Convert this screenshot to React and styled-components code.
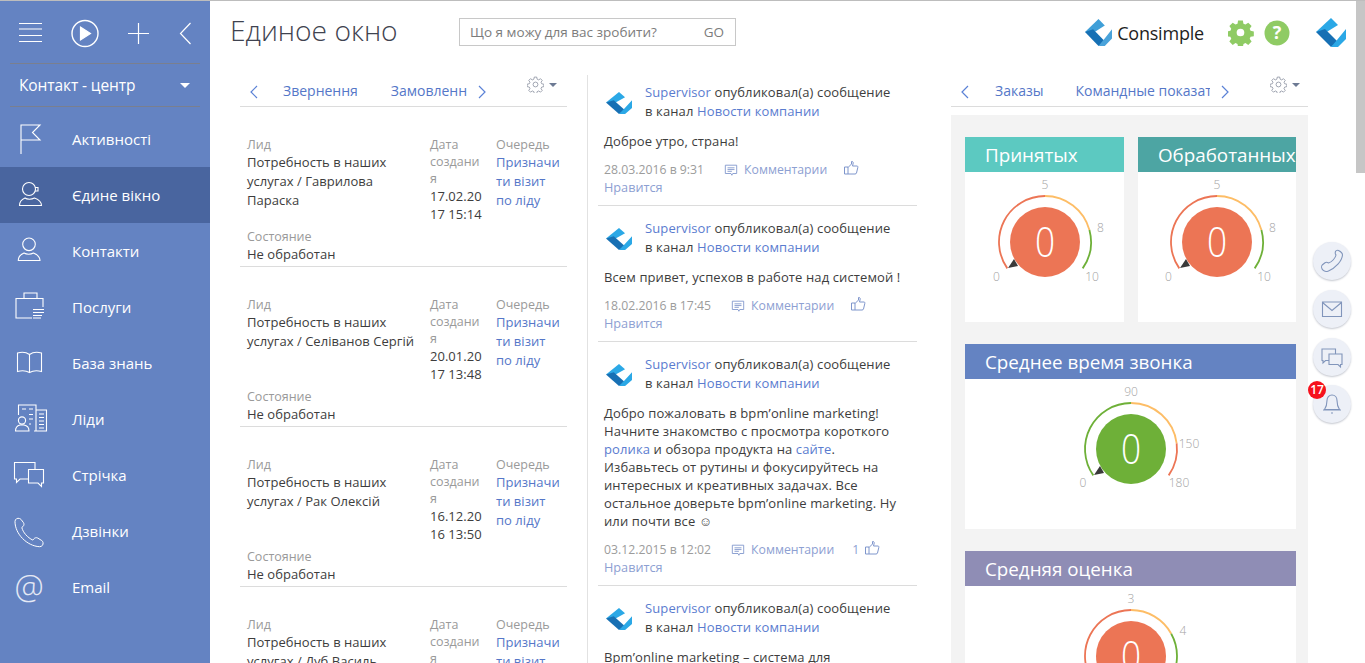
import React from "react";
import styled, { createGlobalStyle } from "styled-components";

const Global = createGlobalStyle`
  html, body { margin: 0; padding: 0; height: 100%; overflow: hidden; background: #fff; }
  body { font-family: "Open Sans", "Noto Sans", sans-serif; color: #444; }
  * { box-sizing: border-box; }
`;

const FONT = `"Open Sans", "Noto Sans", sans-serif`;

const Page = styled.div`
  position: relative;
  display: flex;
  width: 100%;
  height: 100vh;
  overflow: hidden;
  border-top: 1px solid #bdbdbd;
`;

/* ---------- sidebar ---------- */
const Sidebar = styled.aside`
  flex: 0 0 210px;
  background: #6483c2;
  color: #fff;
  display: flex;
  flex-direction: column;
`;
const ToolRow = styled.div`
  height: 63px;
  margin: 0 10px;
  padding-top: 14px;
  border-bottom: 1px solid #7a7f8e;
`;
const ToolSvg = styled.svg`
  display: block;
  fill: none;
  stroke: #fff;
  stroke-width: 1.2;
`;
const SectionRow = styled.div`
  height: 43px;
  margin: 0 10px;
  padding: 0 10px 0 9px;
  display: flex;
  align-items: center;
  justify-content: space-between;
  border-bottom: 1px solid #7a7f8e;
  font-size: 15.5px;
  font-weight: 500;
  letter-spacing: -0.1px;
`;
const Caret = styled.span`
  width: 0;
  height: 0;
  border-left: ${(p) => p.$s || 5}px solid transparent;
  border-right: ${(p) => p.$s || 5}px solid transparent;
  border-top: ${(p) => p.$s || 5}px solid ${(p) => p.$color || "#fff"};
`;
const Menu = styled.nav`
  margin-top: 4px;
  display: flex;
  flex-direction: column;
`;
const MenuItem = styled.div`
  height: 56px;
  padding-left: 10px;
  display: flex;
  align-items: center;
  gap: 22px;
  font-size: 15px;
  font-weight: 500;
  background: ${(p) => (p.$active ? "#49659f" : "transparent")};
`;
const MenuIcon = styled.svg`
  flex: 0 0 40px;
  width: 40px;
  height: 40px;
  fill: none;
  stroke: #fff;
  stroke-width: 1.1;
`;
const AtGlyph = styled.span`
  flex: 0 0 40px;
  width: 40px;
  padding-right: 2px;
  text-align: center;
  font-size: 33px;
  font-weight: 300;
  line-height: 40px;
  color: #e4e9f5;
`;

/* ---------- main ---------- */
const Main = styled.main`
  flex: 1;
  min-width: 0;
  display: flex;
  flex-direction: column;
`;
const Header = styled.header`
  height: 69px;
  flex: none;
  padding: 17px 19px 0 20px;
  display: flex;
  align-items: flex-start;
`;
const Title = styled.h1`
  margin: 0;
  width: 229px;
  font-size: 28.200px;
  line-height: 24px;
  font-weight: 300;
  color: #3f4350;
  white-space: nowrap;
`;
const Search = styled.div`
  width: 277px;
  height: 28px;
  border: 1px solid #c8c8c8;
  display: flex;
  align-items: center;
  justify-content: space-between;
  padding: 0 11px 0 10px;
  font-size: 13.5px;
  color: #7c7c7c;
`;
const HeaderRight = styled.div`
  margin-left: auto;
  display: flex;
  align-items: center;
  height: 29px;
`;
const Brand = styled.span`
  margin: 0 24px 0 5px;
  font-size: 18px;
  color: #1e1e1e;
  letter-spacing: -0.2px;
`;
const GearIcon = styled.svg`
  display: block;
  margin-right: 10px;
`;
const HelpIcon = styled.svg`
  display: block;
  margin-right: 26px;
`;
const Columns = styled.div`
  flex: 1;
  min-height: 0;
  display: flex;
  padding-left: 30px;
`;
const LeftCol = styled.section`
  flex: 0 0 327px;
  min-width: 0;
`;
const MiddleCol = styled.section`
  flex: 0 0 364px;
  margin: 5px 0 0 20px;
  padding: 0 34px 0 10px;
  border-left: 1px solid #e2e2e2;
`;
const RightCol = styled.section`
  flex: 0 0 357px;
  min-width: 0;
`;

/* tabs */
const Tabs = styled.div`
  height: 37px;
  display: flex;
  align-items: flex-end;
  border-bottom: 1px solid #dcdcdc;
  padding: 0 0 5px 9px;
  position: relative;
`;
const Chevron = styled.svg`
  flex: none;
  width: 10px;
  height: 14px;
  margin-bottom: 2px;
  fill: none;
  stroke: #5b82d6;
  stroke-width: 1.2;
`;
const TabViewport = styled.div`
  width: ${(p) => p.$w}px;
  margin: 0 10px 0 ${(p) => p.$ml}px;
  overflow: hidden;
  display: flex;
  gap: ${(p) => p.$gap}px;
  white-space: nowrap;
  font-size: 14px;
  line-height: 20px;
  color: #5577c8;
`;
const Settings = styled.div`
  position: absolute;
  right: ${(p) => p.$r}px;
  top: 6px;
  display: flex;
  align-items: center;
  gap: 5px;
`;
const GearSvg = styled.svg`
  width: 17px;
  height: 17px;
  fill: none;
  stroke: #7b8394;
  stroke-width: 1;
`;

/* lead list */
const Lead = styled.article`
  height: 160px;
  padding: 29px 0 0 7px;
  border-bottom: 1px solid #dcdcdc;
  display: flex;
  flex-direction: column;
`;
const LeadGrid = styled.div`
  display: grid;
  grid-template-columns: 172px 11px 54px 12px 66px;
  flex: none;
  height: 91px;
`;
const Label = styled.div`
  font-size: 12.500px;
  line-height: 17px;
  color: #9a9a9a;
`;
const Value = styled.div`
  font-size: 13px;
  line-height: 19px;
  color: #3d3d3d;
  letter-spacing: 0.03px;
`;
const LeadName = styled.div`
  grid-column: 1;
`;
const DateCell = styled.div`
  grid-column: 3;
  overflow-wrap: anywhere;
  ${Value} { line-height: 18px; }
`;
const QueueCell = styled.div`
  grid-column: 5;
  overflow-wrap: anywhere;
  ${Value} { color: #5577c8; }
`;
const StatusBlock = styled.div`
  margin-top: 1px;
`;

/* posts */
const Post = styled.article`
  padding: 13px 0 9px 6px;
  border-bottom: 1px solid #dcdcdc;
  &:first-child { padding-top: 8px; }
`;
const PostHead = styled.div`
  display: flex;
  font-size: 13px;
  line-height: 19px;
  color: #3d3d3d;
  letter-spacing: 0.12px;
`;
const AvatarSlot = styled.div`
  flex: 0 0 41px;
  padding: 9px 0 0 2px;
`;
const A = styled.span`
  color: #5a7ccf;
`;
const PostBody = styled.p`
  margin: 11px 0 0 0;
  font-size: 13px;
  line-height: 18px;
  color: #3d3d3d;
  width: 300px;
  letter-spacing: 0.11px;
`;
const Meta = styled.div`
  margin-top: 11px;
  display: flex;
  align-items: center;
  gap: 6px;
  font-size: 12.250px;
  line-height: 17px;
  color: #8da0d2;
`;
const DateText = styled.span`
  color: #9c9c9c;
  margin-right: 14px;
`;
const Count = styled.span`
  margin-left: 12px;
`;
const Like = styled.div`
  font-size: 12.700px;
  line-height: 18px;
  color: #8da0d2;
`;
const MetaIcon = styled.svg`
  flex: none;
  width: 14px;
  height: 16px;
  fill: none;
  stroke: #7f96cc;
  stroke-width: 1;
`;
const ThumbIcon = styled(MetaIcon)`
  width: 16px;
  margin-left: ${(p) => p.$ml}px;
  margin-top: -4px;
`;

/* dashboard */
const Dash = styled.div`
  margin-top: 8px;
  height: 548px;
  overflow: hidden;
  background: #f3f3f3;
  padding: 22px 12px 0 14px;
  display: grid;
  grid-template-columns: 159px 158px;
  grid-auto-rows: max-content;
  column-gap: 14px;
  row-gap: 22px;
  align-content: start;
`;
const Card = styled.div`
  background: #fff;
  overflow: hidden;
  grid-column: ${(p) => (p.$wide ? "1 / span 2" : "auto")};
`;
const CardTitle = styled.div`
  height: 35px;
  background: ${(p) => p.$bg};
  color: #fff;
  font-size: 18.800px;
  line-height: 36px;
  padding-left: 20px;
  white-space: nowrap;
`;
const GaugeWrap = styled.div`
  height: 150px;
  display: flex;
  justify-content: center;
`;
const GaugeSvg = styled.svg`
  display: block;
  width: 150px;
  height: 150px;
  font-family: ${FONT};
`;

/* floating buttons */
const Floating = styled.div`
  position: absolute;
  right: 14px;
  top: 241px;
  display: flex;
  flex-direction: column;
  gap: 10px;
`;
const RoundBtn = styled.div`
  position: relative;
  width: 38px;
  height: 38px;
  border-radius: 50%;
  background: #edf0f7;
  box-shadow: 0 1px 2px #c4c7cf;
  display: flex;
  align-items: center;
  justify-content: center;
  &:last-child { margin-top: -1px; }
`;
const RoundSvg = styled.svg`
  width: 24px;
  height: 24px;
  fill: none;
  stroke: #8195bb;
  stroke-width: 1.1;
`;
const Badge = styled.span`
  position: absolute;
  left: -5px;
  top: -4px;
  width: 18px;
  height: 18px;
  border-radius: 50%;
  background: #f6121d;
  color: #fff;
  font-size: 12px;
  font-weight: 600;
  line-height: 18px;
  text-align: center;
`;
const ScrollThumb = styled.div`
  position: absolute;
  top: 0;
  right: 0;
  width: 9px;
  height: 172px;
  background: #c6c6c6;
`;

const Logo = ({ w = 26, h = 22, a = "#2ba8e6", b = "#1770b4", c = "#2ba8e6" }) => (
  <svg width={w} height={h} viewBox="0 0 30 29" preserveAspectRatio="none" style={{ flex: "none", display: "block" }}>
    <polygon points="15,0 22,7 9,15 0,14" fill={a} />
    <polygon points="0,14 9,11 22,24 15,29" fill={b} />
    <polygon points="30,11 30,21 22,29 15,29 21,22" fill={c} />
  </svg>
);

const Gear = () => (
  <GearSvg viewBox="0 0 24 24">
    <circle cx="12" cy="12" r="3.4" />
    <path d="M10.3 1.5h3.4l.6 3 2.2 1 2.6-1.7 2.4 2.4-1.7 2.6 1 2.2 3 .6v3.4l-3 .6-1 2.2 1.7 2.6-2.4 2.4-2.6-1.7-2.2 1-.6 3h-3.4l-.6-3-2.2-1-2.6 1.7-2.4-2.4 1.7-2.6-1-2.2-3-.6v-3.4l3-.6 1-2.2-1.7-2.6 2.4-2.4 2.6 1.7 2.2-1z" />
  </GearSvg>
);

const ChevL = () => (
  <Chevron viewBox="0 0 10 14"><path d="M8 1 2 7l6 6" /></Chevron>
);
const ChevR = () => (
  <Chevron viewBox="0 0 10 14"><path d="M2 1l6 6-6 6" /></Chevron>
);

const polar = (r, deg) => {
  const t = (deg * Math.PI) / 180;
  return [r * Math.sin(t), -r * Math.cos(t)];
};
const arc = (r, from, to) => {
  const [x1, y1] = polar(r, from);
  const [x2, y2] = polar(r, to);
  return `M${x1.toFixed(2)} ${y1.toFixed(2)}A${r} ${r} 0 ${to - from > 180 ? 1 : 0} 1 ${x2.toFixed(2)} ${y2.toFixed(2)}`;
};

const Gauge = ({ fill, segs, labels }) => (
  <GaugeSvg viewBox="-75 -70 150 150">
    {segs.map((s, i) => (
      <path key={i} d={arc(46, s[0], s[1])} fill="none" stroke={s[2]} strokeWidth="1.8" />
    ))}
    <circle r="35" fill={fill} />
    <polygon points="-37,26 -27,24 -31,17" fill="#3a3a3a" />
    <text transform="scale(.84 1)" x="0" y="15" textAnchor="middle" fontSize="42" fontWeight="300" fill="#fff">0</text>
    {labels.map((l) => (
      <text key={l[0]} x={l[1]} y={l[2] + 4} textAnchor="middle" fontSize="12" fontWeight="300" fill="#a3a3a3">{l[0]}</text>
    ))}
  </GaugeSvg>
);

const RED = "#ec7555", YEL = "#fdbd66", GRN = "#6eb038";
const g1 = {
  fill: RED,
  segs: [[-125, 0, RED], [0, 75, YEL], [75, 125, GRN]],
  labels: [["5", 0, -57], ["8", 55.5, -14], ["0", -48.5, 34.5], ["10", 47, 34.5]],
};
const g2 = {
  fill: GRN,
  segs: [[-125, 0, GRN], [0, 83, YEL], [83, 125, RED]],
  labels: [["90", 0, -57], ["150", 58, -5], ["0", -48, 34], ["180", 48, 34]],
};
const g3 = {
  fill: RED,
  segs: [[-125, 0, RED], [0, 61, YEL], [61, 125, GRN]],
  labels: [["3", 0, -57], ["4", 52, -25]],
};

const leads = [
  ["Потребность в наших услугах / Гаврилова Параска", "17.02.2017 15:14"],
  ["Потребность в наших услугах / Селіванов Сергій", "20.01.2017 13:48"],
  ["Потребность в наших услугах / Рак Олексій", "16.12.2016 13:50"],
  ["Потребность в наших услугах / Дуб Василь", "10.12.2016 11:20"],
];

const PostItem = ({ date, count, thumbGap, children }) => (
  <Post>
    <PostHead>
      <AvatarSlot><Logo /></AvatarSlot>
      <div>
        <A>Supervisor</A> опубликовал(а) сообщение<br />в канал <A>Новости компании</A>
      </div>
    </PostHead>
    <PostBody>{children}</PostBody>
    {date && (
      <>
        <Meta>
          <DateText>{date}</DateText>
          <MetaIcon viewBox="0 0 16 16">
            <path d="M1.5 2.5h13v9.5H10l-1 2-1-2H1.5z" />
            <path d="M4 5.5h8M4 7.5h8M4 9.5h5" />
          </MetaIcon>
          Комментарии
          {count && <Count>{count}</Count>}
          <ThumbIcon $ml={thumbGap} viewBox="0 0 16 16">
            <path d="M5 7h-3.500v7H5zM5 7.500 8.500 4V1.500c1.500-.5 2 1 1.500 2.500L9.500 6h4.500c1 0 1 1 .7 2L13.500 13c-.2.700-.7 1-1.500 1H5" />
          </ThumbIcon>
        </Meta>
        <Like>Нравится</Like>
      </>
    )}
  </Post>
);

export default function App() {
  return (
    <Page>
      <Global />
      <Sidebar>
        <ToolRow>
          <ToolSvg width="190" height="38" viewBox="0 0 190 38">
            <path d="M9 8.500h23M9 14h23M9 20.500h23M9 26.500h23" />
            <circle cx="75" cy="18.500" r="13" strokeWidth="1.400" />
            <path d="M70.500 12v13l10-6.500z" fill="#fff" />
            <path d="M128.500 8v21M118 18.500h21" />
            <path d="M180.500 8l-10 10.500 10 10.500" />
          </ToolSvg>
        </ToolRow>
        <SectionRow>
          Контакт - центр
          <Caret />
        </SectionRow>
        <Menu>
          <MenuItem>
            <MenuIcon viewBox="0 0 40 40"><path d="M11 35V6h19l-7.500 7.500L30 21H11" /></MenuIcon>
            Активності
          </MenuItem>
          <MenuItem $active>
            <MenuIcon viewBox="0 0 40 40">
              <circle cx="19" cy="14" r="6.500" />
              <path d="M25 12.500h3v3.500h-3M9.500 30.500h22c0-4-3-6-7-7.500-1.500.8-3 1.200-5 1.200s-3.500-.4-4.500-1.200c-3 1.300-5.500 3.500-5.500 7.500z" />
            </MenuIcon>
            Єдине вікно
          </MenuItem>
          <MenuItem>
            <MenuIcon viewBox="0 0 40 40">
              <circle cx="19" cy="13.300" r="6.300" />
              <path d="M8.300 29.500h21.700c0-4-3-6-6.500-7.500-1.500.8-3 1.200-4.800 1.200s-3.400-.4-4.700-1.200c-3 1.300-5.700 3.500-5.700 7.500z" />
            </MenuIcon>
            Контакти
          </MenuItem>
          <MenuItem>
            <MenuIcon viewBox="0 0 40 40">
              <path d="M14 11.500V6h13v5.500M22 31H6V11.500h27V20" />
              <path d="M23 22.500h11M23 25.500h11M23 28.500h9M23 31h8" />
            </MenuIcon>
            Послуги
          </MenuItem>
          <MenuItem>
            <MenuIcon viewBox="0 0 40 40">
              <path d="M19.500 11.500C16 9 11 9 7.500 10v18.500c3.500-1 8.500-1 12 1 3.500-2 8.500-2 12-1V10c-3.500-1-8.500-1-12 1.500zM19.500 11.500v18" />
            </MenuIcon>
            База знань
          </MenuItem>
          <MenuItem>
            <MenuIcon viewBox="0 0 40 40">
              <path d="M8.500 16V6H26v26h-2M26 11h10.500v21H26" />
              <path d="M12 10h4M19 10h4M19 15.500h4M19 20h4M19 25h2M29 15h5M29 18.500h5M29 22h5M29 25.500h5M29 29h5" />
              <circle cx="12" cy="21.500" r="3.600" />
              <path d="M5.500 32c0-3.500 2-5.500 4.500-6h4c3 .5 5 2.500 5 6z" />
            </MenuIcon>
            Ліди
          </MenuItem>
          <MenuItem>
            <MenuIcon viewBox="0 0 40 40">
              <path d="M18.500 24H10l-3.500 3.500V24h-2V7.500H25v7" />
              <path d="M18.500 14.500h15V28h-2v3.500L28 28h-9.500z" />
            </MenuIcon>
            Стрічка
          </MenuItem>
          <MenuItem>
            <MenuIcon viewBox="0 0 40 40">
              <path d="M9.500 7.500c-2-.8-4.500.5-4.500 3C5 23 17 35 29.500 35.700c2.500 0 4-2 3.500-4.200-.2-1-.6-1.500-1.200-1.900l-4-2.500c-1.500-.8-3-.3-4 .8l-1 1.200C17.500 26.500 13 21.500 11.800 16.500l1.200-1c1-1 1.300-2.500.5-3.800l-2.500-3.300c-.5-.5-1-.7-1.500-.9z" strokeWidth="1" />
            </MenuIcon>
            Дзвінки
          </MenuItem>
          <MenuItem>
            <AtGlyph>@</AtGlyph>
            Email
          </MenuItem>
        </Menu>
      </Sidebar>

      <Main>
        <Header>
          <Title>Единое окно</Title>
          <Search>Що я можу для вас зробити?<span>GO</span></Search>
          <HeaderRight>
            <Logo w={27} h={27} a="#3f9fd8" b="#1770b4" c="#4aa3da" />
            <Brand>Consimple</Brand>
            <GearIcon width="26" height="26" viewBox="0 0 26 26">
              <path fill="#8fcb64" fillRule="evenodd" d="M10.500 0.500h5l.6 3.400 2.100.9 2.900-2 3.500 3.500-2 2.900.9 2.100 3.400.6v5l-3.400.6-.9 2.100 2 2.900-3.500 3.500-2.900-2-2.100.9-.6 3.400h-5l-.6-3.400-2.100-.9-2.900 2-3.500-3.500 2-2.900-.9-2.100-3.400-.6v-5l3.400-.6.9-2.100-2-2.900 3.500-3.500 2.900 2 2.100-.9zM13 9a4 4 0 1 0 0 8 4 4 0 0 0 0-8z" transform="scale(.96)" />
            </GearIcon>
            <HelpIcon width="26" height="26" viewBox="0 0 26 26">
              <circle cx="13" cy="13" r="12.500" fill="#8fcb64" />
              <text x="13" y="19" textAnchor="middle" fontSize="18" fontWeight="700" fill="#fff" fontFamily={FONT}>?</text>
            </HelpIcon>
            <Logo w={30} h={29} />
          </HeaderRight>
        </Header>
        <Columns>
          <LeftCol>
            <Tabs>
              <ChevL />
              <TabViewport $ml={24} $w={184} $gap={33}>
                <span>Звернення</span>
                <span>Замовлення</span>
              </TabViewport>
              <ChevR />
              <Settings $r={10}>
                <Gear />
                <Caret $s={4} $color="#6d7a94" />
              </Settings>
            </Tabs>
            {leads.map((l) => (
              <Lead key={l[1]}>
                <LeadGrid>
                  <LeadName>
                    <Label>Лид</Label>
                    <Value>{l[0]}</Value>
                  </LeadName>
                  <DateCell>
                    <Label>Дата создания</Label>
                    <Value>{l[1]}</Value>
                  </DateCell>
                  <QueueCell>
                    <Label>Очередь</Label>
                    <Value>Призначити візит по ліду</Value>
                  </QueueCell>
                </LeadGrid>
                <StatusBlock>
                  <Label>Состояние</Label>
                  <Value>Не обработан</Value>
                </StatusBlock>
              </Lead>
            ))}
          </LeftCol>
          <MiddleCol>
            <PostItem date="28.03.2016 в 9:31" thumbGap={10}>Доброе утро, страна!</PostItem>
            <PostItem date="18.02.2016 в 17:45" thumbGap={10}>Всем привет, успехов в работе над системой !</PostItem>
            <PostItem date="03.12.2015 в 12:02" count="1" thumbGap={-1}>
              Добро пожаловать в bpm’online marketing! Начните знакомство с просмотра короткого <A>ролика</A> и обзора продукта на <A>сайте</A>. Избавьтесь от рутины и фокусируйтесь на интересных и креативных задачах. Все остальное доверьте bpm’online marketing. Ну или почти все ☺
            </PostItem>
            <PostItem>Bpm’online marketing – система для</PostItem>
          </MiddleCol>
          <RightCol>
            <Tabs>
              <ChevL />
              <TabViewport $ml={25} $w={215} $gap={32}>
                <span>Заказы</span>
                <span>Командные показатели</span>
              </TabViewport>
              <ChevR />
              <Settings $r={8}>
                <Gear />
                <Caret $s={4} $color="#6d7a94" />
              </Settings>
            </Tabs>
            <Dash>
              <Card>
                <CardTitle $bg="#5cc9c1">Принятых</CardTitle>
                <GaugeWrap><Gauge {...g1} /></GaugeWrap>
              </Card>
              <Card>
                <CardTitle $bg="#4da5a3">Обработанных</CardTitle>
                <GaugeWrap><Gauge {...g1} /></GaugeWrap>
              </Card>
              <Card $wide>
                <CardTitle $bg="#6483c2">Среднее время звонка</CardTitle>
                <GaugeWrap><Gauge {...g2} /></GaugeWrap>
              </Card>
              <Card $wide>
                <CardTitle $bg="#8f8db5">Средняя оценка</CardTitle>
                <GaugeWrap><Gauge {...g3} /></GaugeWrap>
              </Card>
            </Dash>
          </RightCol>
        </Columns>
      </Main>

      <ScrollThumb />
      <Floating>
        <RoundBtn>
          <RoundSvg viewBox="0 0 24 24">
            <path d="M18.500 1.500c-1-.5-2.500 0-3 1-.5 1.500-.5 2.500.5 3.500-.5 3-4 7-7.500 8-1-.7-2.500-1-3.500-.3l-2.500 2c-1.500 1.500-1 4 .5 5.500s3.500 1.500 5.500.7C15.500 19 22 12 22.500 6c0-2-2-3.500-4-4.500z" />
          </RoundSvg>
        </RoundBtn>
        <RoundBtn>
          <RoundSvg viewBox="0 0 24 24">
            <path d="M2.500 5h19v14.500h-19zM2.500 5.500 12 13.500l9.500-8" />
          </RoundSvg>
        </RoundBtn>
        <RoundBtn>
          <RoundSvg viewBox="0 0 24 24">
            <path d="M9 15.500H5.500L3 18v-2.500H2V4h13.500v5" />
            <path d="M9 9h13v10.500h-1.500V22l-2.500-2.500H9z" />
          </RoundSvg>
        </RoundBtn>
        <RoundBtn>
          <RoundSvg viewBox="0 0 24 24">
            <path d="M12 3c-3 0-5 2.500-5 5.500 0 4-.5 6-2.500 9h15c-2-3-2.500-5-2.500-9C17 5.500 15 3 12 3zM3 18h18M11 21h2" />
          </RoundSvg>
          <Badge>17</Badge>
        </RoundBtn>
      </Floating>
    </Page>
  );
}
